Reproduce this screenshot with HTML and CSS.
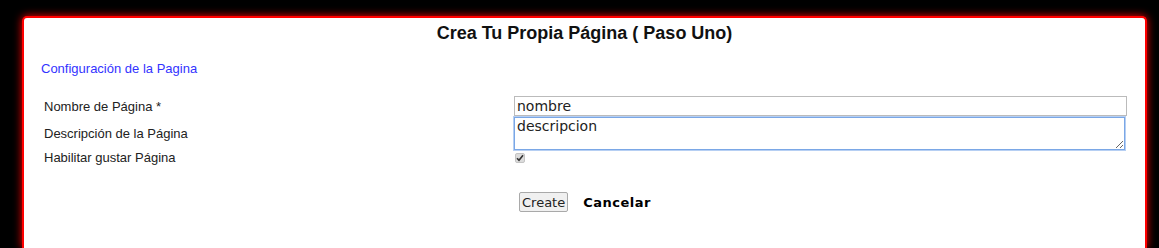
FILE: index.html
```html
<!DOCTYPE html>
<html>

<head>
    <title>Crea Tu Propia Página</title>
    <link rel="stylesheet" href="styles.css">
</head>

<body>
    <div class="panel">
        <h2 class="title">Crea Tu Propia Página ( Paso Uno)</h2>
        <div class="section">Configuración de la Pagina</div>
        <table class="form">
            <tr class="row-name">
                <td class="label">Nombre de Página *</td>
                <td><input type="text" class="txt" value="nombre"></td>
            </tr>
            <tr class="row-desc">
                <td class="label">Descripción de la Página</td>
                <td><textarea class="area">descripcion</textarea></td>
            </tr>
            <tr class="row-like">
                <td class="label">Habilitar gustar Página</td>
                <td>
                    <span class="chk">
                        <svg width="8" height="8" viewBox="0 0 8 8">
                            <path d="M1 4.2 L3 6.3 L7 1.3" fill="none" stroke="#333333" stroke-width="1.6"/>
                        </svg>
                    </span>
                </td>
            </tr>
        </table>
        <div class="actions">
            <input type="button" class="btn" value="Create">
            <a class="cancel">Cancelar</a>
        </div>
    </div>
</body>

</html>
```

FILE: styles.css
```css
body {
    margin: 0;
    padding: 16px 12px 0 22px;
    background: #000000;
    font-family: "Liberation Sans", Arial, sans-serif;
    font-size: 13px;
    color: #222222;
    overflow: hidden;
}

.panel {
    background: #ffffff;
    border: 2px solid #ff0000;
    border-bottom: none;
    border-radius: 5px 5px 0 0;
    box-shadow: 0 0 9px #ff0000;
    height: 232px;
    box-sizing: border-box;
}

.title {
    margin: 4px 0 0 0;
    text-align: center;
    font-size: 18px;
    line-height: 22px;
    color: #111111;
}

.section {
    color: #3333ff;
    margin: 17px 0 0 17px;
    line-height: 16px;
}

.form {
    margin: 18px 0 0 17px;
    border-collapse: collapse;
    width: 1090px;
}

.form td {
    padding: 0 3px;
}

.form .label {
    width: 465px;
}

.row-name td {
    height: 20px;
    padding-top: 1px;
}

.row-desc td {
    height: 33px;
}

.row-desc .label {
    padding-top: 1px;
}

.txt {
    display: block;
    box-sizing: border-box;
    width: 613px;
    height: 20px;
    margin: 0 0 0 -1px;
    padding: 0 2px;
    border: 1px solid #bbbbbb;
    font-family: "DejaVu Sans", Verdana, sans-serif;
    font-size: 14px;
    color: #222222;
}

.area {
    display: block;
    box-sizing: border-box;
    width: 611px;
    height: 33px;
    margin: 0 0 0 -1px;
    padding: 0 2px;
    border: 1px solid #7aa7e6;
    outline: 1px solid #b6cff3;
    font-family: "DejaVu Sans", Verdana, sans-serif;
    font-size: 14px;
    line-height: 17px;
    color: #222222;
}

.row-like td {
    height: 14px;
}

.chk {
    display: flex;
    align-items: center;
    justify-content: center;
    width: 10px;
    height: 10px;
    box-sizing: border-box;
    background: #dcdcdc;
    border: 1px solid #c4c4c4;
    border-radius: 2px;
}

.actions {
    margin: 27px 0 0 495px;
    display: flex;
    align-items: center;
    gap: 15px;
}

.btn {
    height: 20px;
    padding: 0 2px;
    font-family: "DejaVu Sans", Verdana, sans-serif;
    font-size: 13px;
    background: #f0f0f0;
    border: 1px solid #a9a9a9;
    border-radius: 2px;
    color: #222222;
}

.cancel {
    font-family: "DejaVu Sans", Verdana, sans-serif;
    font-weight: bold;
    font-size: 13px;
    letter-spacing: 0.5px;
    color: #000000;
}
```
